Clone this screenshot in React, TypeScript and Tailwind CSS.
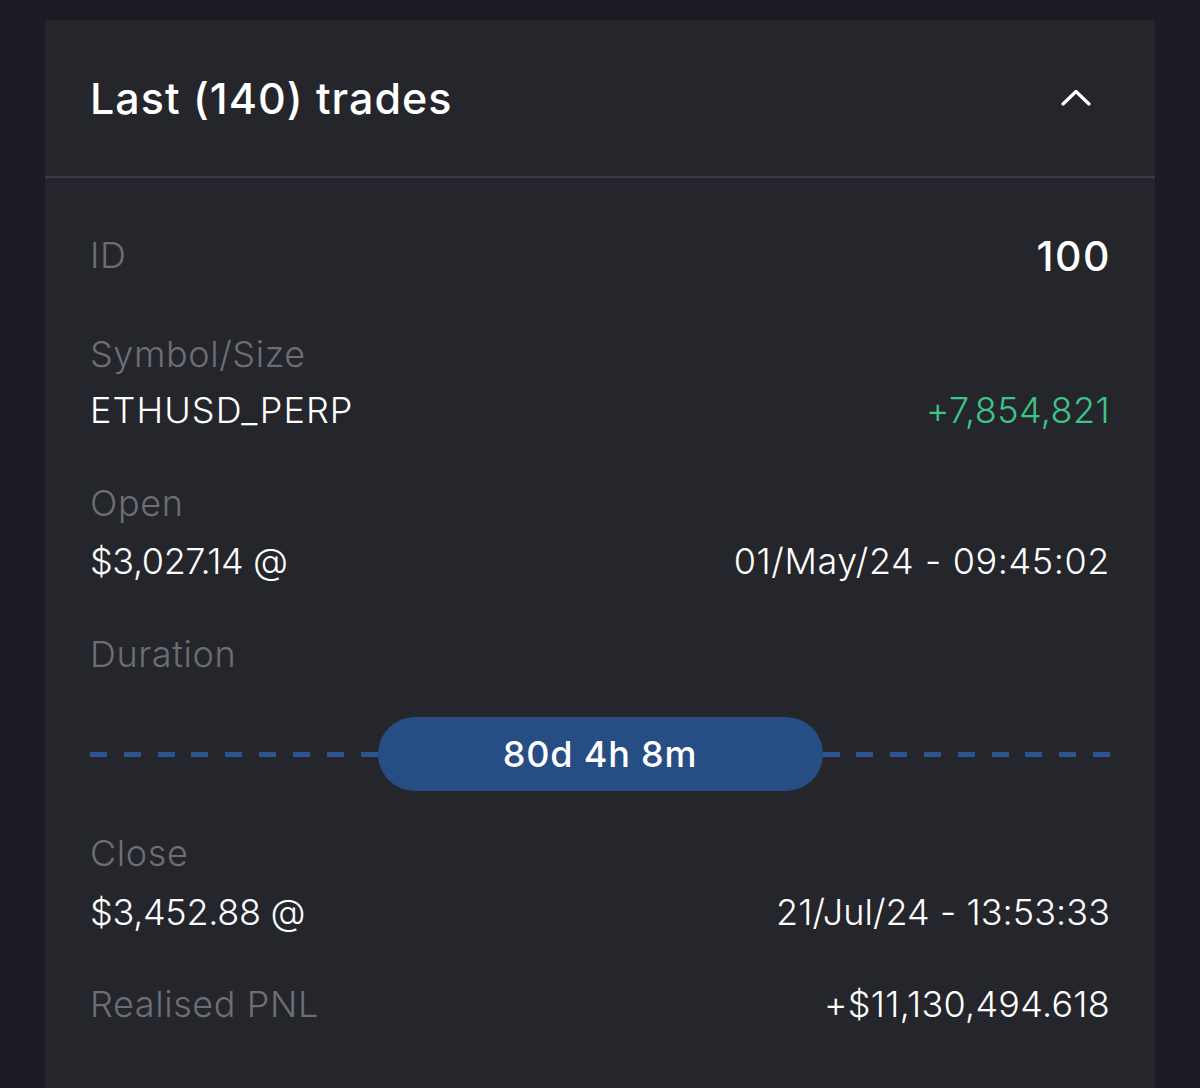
import React from "react";

const font = { fontFamily: "Inter, 'Noto Sans', sans-serif" };

function Label({ children, className = "" }: { children: React.ReactNode; className?: string }) {
  return (
    <div className={`h-[56px] leading-[56px] text-[36px] font-light text-[#6d6e74] tracking-[0.6px] ${className}`}>
      {children}
    </div>
  );
}

function ValueRow({
  left,
  right,
  leftClass = "tracking-[0.8px]",
  rightClass = "text-white tracking-[0.8px]",
  className = "",
}: {
  left: string;
  right: string;
  leftClass?: string;
  rightClass?: string;
  className?: string;
}) {
  return (
    <div className={`flex items-center justify-between h-[56px] text-[36px] font-light ${className}`}>
      <span className={`text-white ${leftClass}`}>{left}</span>
      <span className={rightClass}>{right}</span>
    </div>
  );
}

function Dashes() {
  return (
    <div className="flex-1 flex items-center justify-between">
      {Array.from({ length: 9 }).map((_, i) => (
        <div key={i} className="w-[17px] h-[5px] bg-[#2a5591]" />
      ))}
    </div>
  );
}

export default function App() {
  return (
    <div className="min-h-[1088px] w-[1200px] bg-[#1b1c23] pt-[20px] px-[45px] overflow-hidden" style={font}>
      <div className="bg-[#25262c] min-h-[1068px]">
        <div className="h-[158px] border-b-2 border-[#3a3b46] flex items-center justify-between pl-[45px] pr-[64px]">
          <h1 className="text-[43px] font-medium text-white tracking-[1px]">Last (140) trades</h1>
          <svg width="30" height="17" viewBox="0 0 30 17" fill="none" className="mt-[-2px]">
            <polyline points="2,15 15,2.5 28,15" stroke="white" strokeWidth="3.2" strokeLinecap="round" strokeLinejoin="round" />
          </svg>
        </div>
        <div className="px-[45px] pt-[49px]">
          <div className="flex items-center justify-between h-[56px]">
            <span className="text-[36px] font-light text-[#6d6e74] tracking-[0.6px]">ID</span>
            <span className="text-[41px] font-medium text-white mt-[4px] tracking-[1.5px] mr-[-1px]">100</span>
          </div>
          <Label className="mt-[43px]">Symbol/Size</Label>
          <ValueRow
            left="ETHUSD_PERP"
            leftClass="tracking-[1.1px]"
            right="+7,854,821"
            rightClass="text-[#3ec487] tracking-[0.4px]"
          />
          <Label className="mt-[37px]">Open</Label>
          <ValueRow
            left="$3,027.14 @"
            leftClass="tracking-[-0.4px]"
            right="01/May/24 - 09:45:02"
            rightClass="text-white tracking-[0.6px]"
            className="mt-[2px]"
          />
          <Label className="mt-[37px]">Duration</Label>
          <div className="mt-[35px] h-[74px] flex items-center">
            <Dashes />
            <div className="w-[445px] h-[74px] rounded-full bg-[#264d84] flex items-center justify-center text-[36px] font-medium text-white tracking-[0.8px]">
              80d 4h 8m
            </div>
            <Dashes />
          </div>
          <Label className="mt-[34px]">Close</Label>
          <ValueRow
            left="$3,452.88 @"
            leftClass="tracking-[-0.3px]"
            right="21/Jul/24 - 13:53:33"
            rightClass="text-white tracking-[0.05px]"
            className="mt-[3px]"
          />
          <div className="flex items-center justify-between h-[56px] mt-[36px] text-[36px] font-light tracking-[0.6px]">
            <span className="text-[#6d6e74]">Realised PNL</span>
            <span className="text-white tracking-[0.25px]">+$11,130,494.618</span>
          </div>
        </div>
      </div>
    </div>
  );
}
